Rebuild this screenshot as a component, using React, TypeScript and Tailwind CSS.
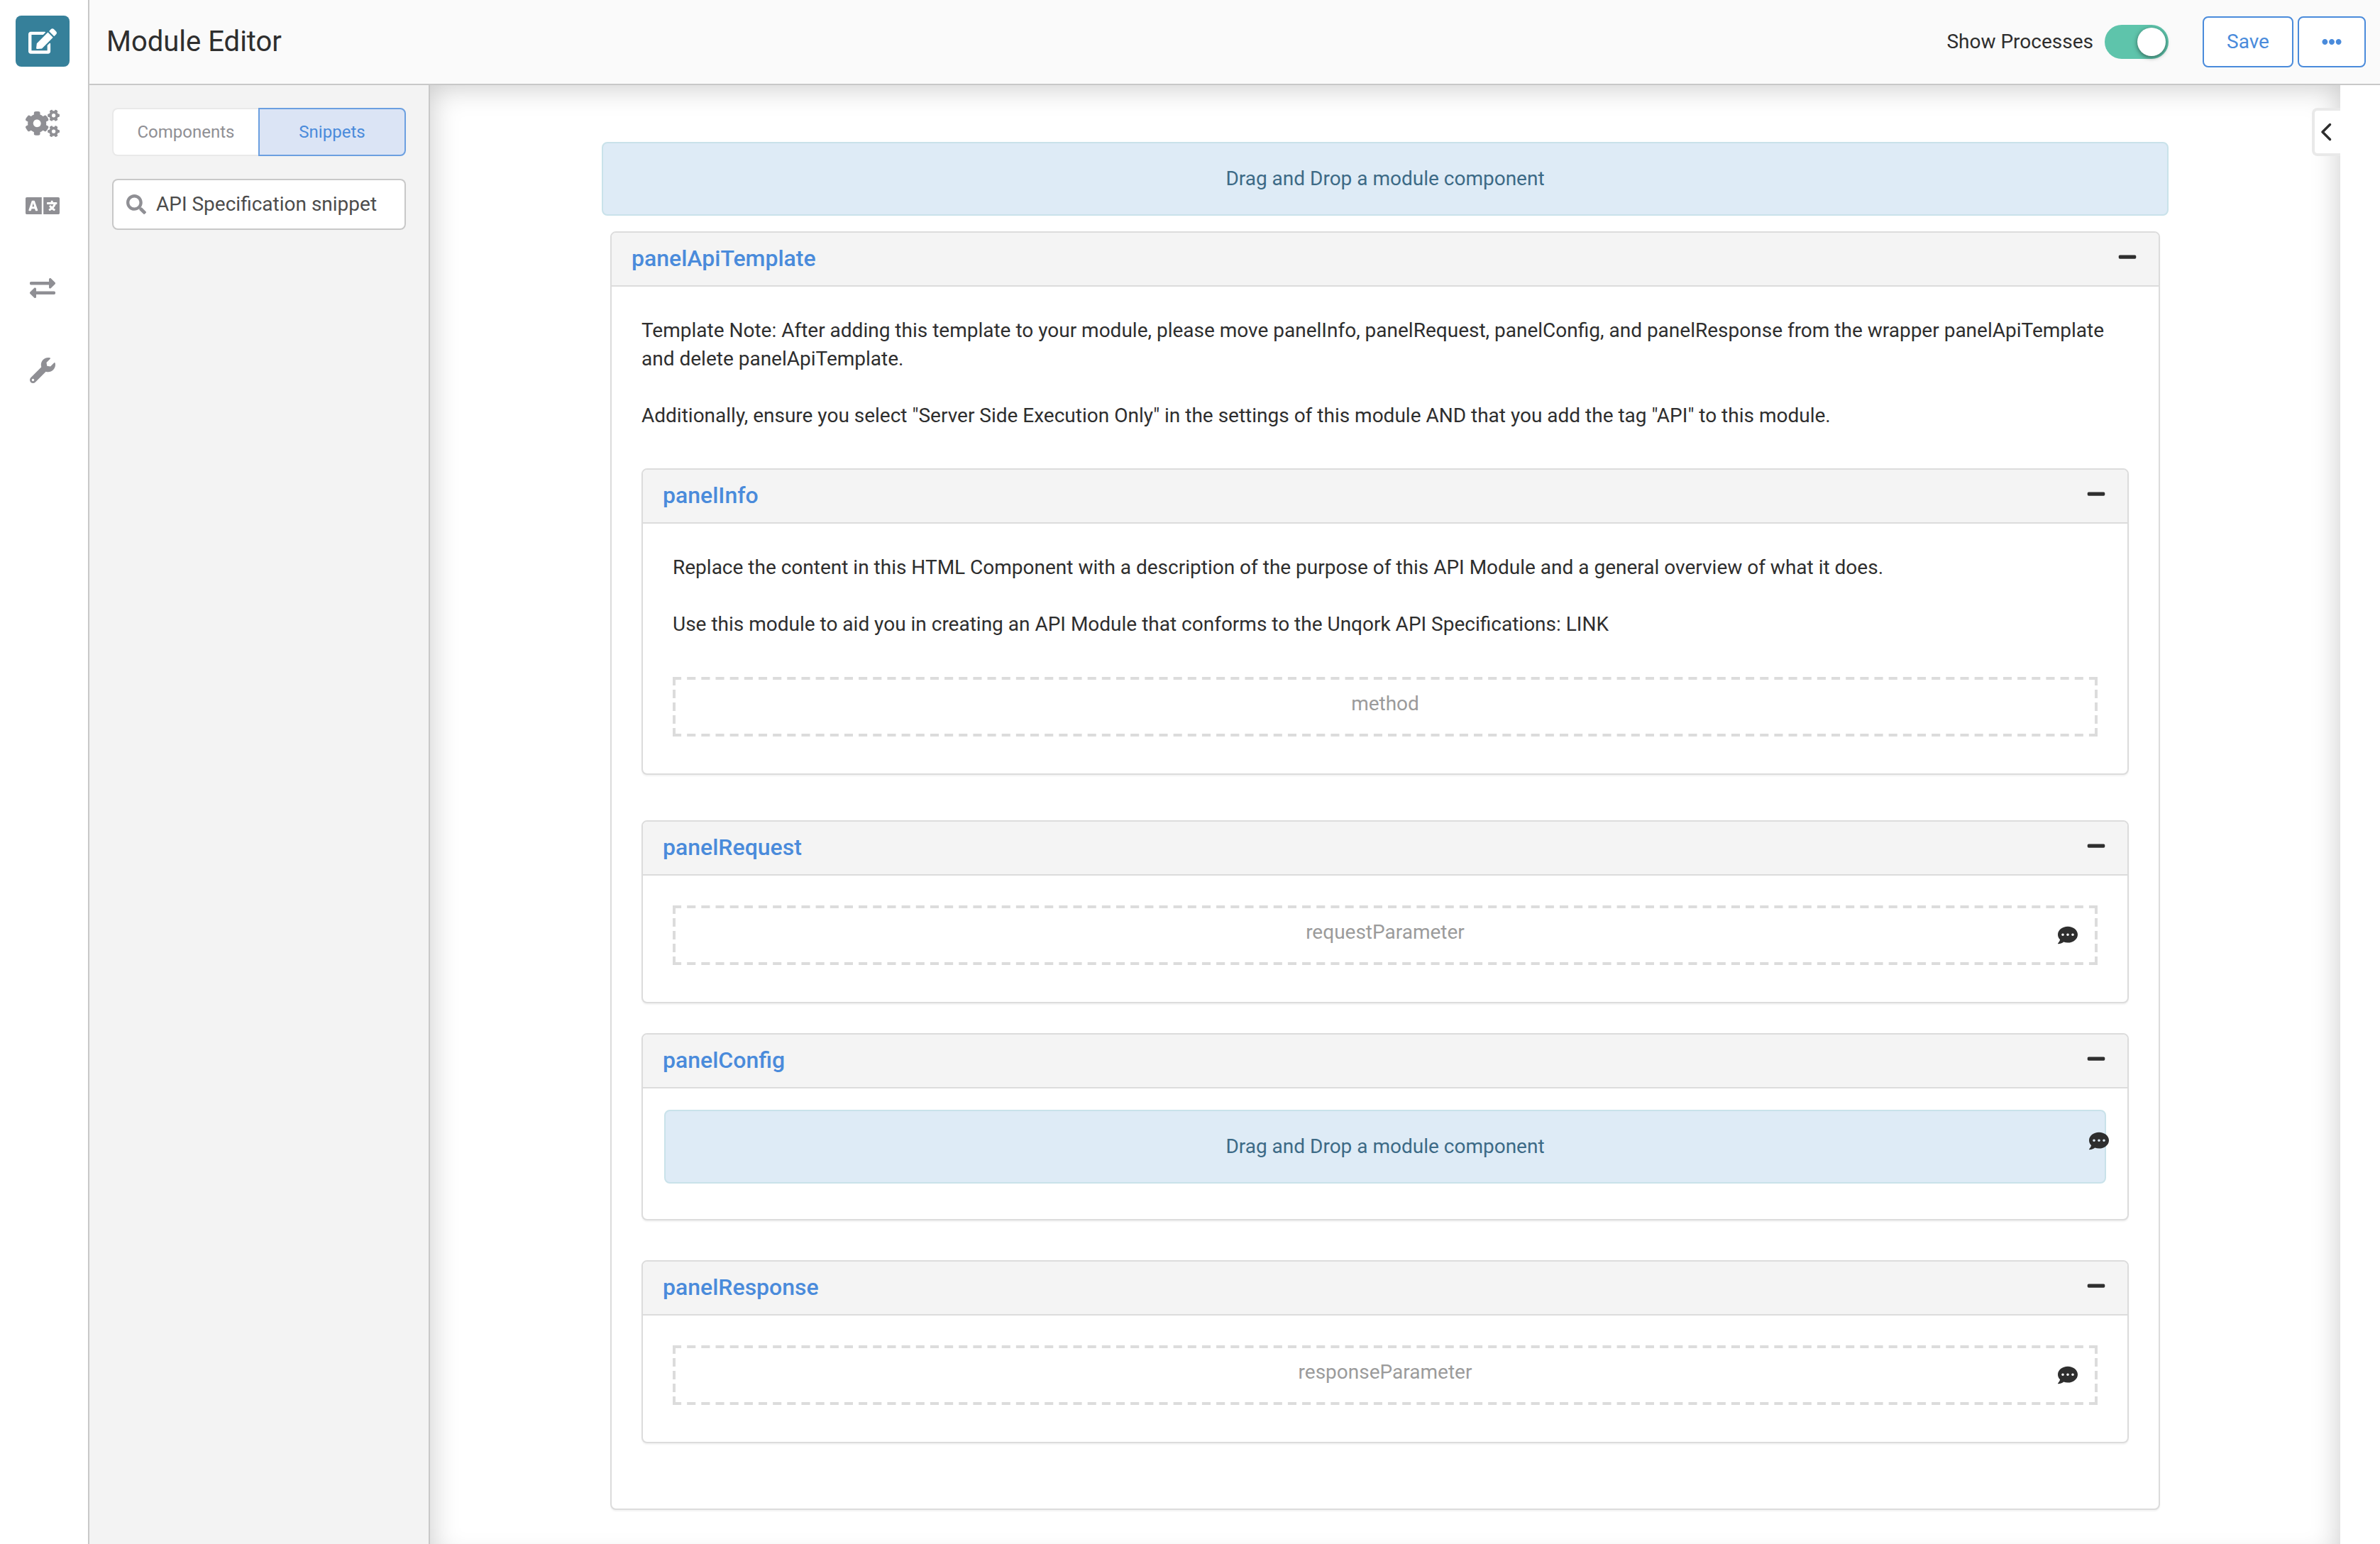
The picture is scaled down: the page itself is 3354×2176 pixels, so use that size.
import type { ReactNode } from "react";
import {
  FaCogs,
  FaCommentDots,
  FaEdit,
  FaEllipsisH,
  FaExchangeAlt,
  FaLanguage,
  FaMinus,
  FaSearch,
  FaWrench,
} from "react-icons/fa";
import { FaChevronLeft } from "react-icons/fa6";

const navItems = [
  { label: "Settings", icon: <FaCogs className="h-12 w-12" /> },
  { label: "Translations", icon: <FaLanguage className="h-12 w-12" /> },
  { label: "Data transfer", icon: <FaExchangeAlt className="h-9 w-9" /> },
  { label: "Tools", icon: <FaWrench className="h-9 w-9" /> },
];

function Sidebar() {
  return (
    <nav className="flex w-[126px] shrink-0 flex-col items-center gap-11 border-r-2 border-[#c8c8c8] bg-white pr-1 pt-[22px]">
      <button
        aria-label="Module Editor"
        className="flex h-[72px] w-[76px] items-center justify-center rounded-lg bg-[#36809a] text-white"
      >
        <FaEdit className="h-9 w-10" />
      </button>
      {navItems.map((item) => (
        <button
          key={item.label}
          aria-label={item.label}
          className="flex h-[72px] w-[76px] items-center justify-center text-[#8f8f94]"
        >
          {item.icon}
        </button>
      ))}
    </nav>
  );
}

function TopBar() {
  return (
    <header className="flex h-[120px] shrink-0 items-center border-b-2 border-[#c8c8c8] bg-[#fafafa] pl-6 pr-5">
      <h1 className="text-[40px] leading-[48px]">Module Editor</h1>
      <label className="ml-auto flex items-center gap-4">
        Show Processes
        <span className="relative flex h-12 w-[90px]">
          <input
            type="checkbox"
            role="switch"
            defaultChecked
            className="peer h-full w-full appearance-none rounded-full bg-[#b9b9b9] checked:bg-[#5ec4ab]"
          />
          <span className="pointer-events-none absolute left-1 top-1 h-10 w-10 rounded-full bg-white shadow-[0_2px_6px_rgba(0,0,0,0.5)] peer-checked:left-[46px]" />
        </span>
      </label>
      <div className="ml-12 flex gap-[6px] text-[#4a8bdb]">
        <button className="h-[72px] w-32 rounded-lg border-2 border-[#4a8bdb] bg-white">Save</button>
        <button
          aria-label="More actions"
          className="flex h-[72px] w-24 items-center justify-center rounded-lg border-2 border-[#4a8bdb] bg-white"
        >
          <FaEllipsisH className="h-7 w-7" />
        </button>
      </div>
    </header>
  );
}

function SnippetSearch() {
  return (
    <aside className="flex w-[480px] shrink-0 flex-col gap-8 border-r-2 border-[#c8c8c8] bg-[#f3f3f3] px-8 pt-8">
      <div className="flex h-[68px] text-2xl">
        <button className="flex-1 rounded-l-lg border-2 border-r-0 border-[#e9e9e9] bg-white text-[#8f8f94]">
          Components
        </button>
        <button className="flex-1 rounded-r-lg border-2 border-[#6b9fe0] bg-[#dbe4f5] text-[#4a8bdb]">
          Snippets
        </button>
      </div>
      <label className="flex h-[72px] items-center gap-[14px] rounded-lg border-2 border-[#c8c8c8] bg-white pl-[18px] pr-4">
        <FaSearch aria-hidden="true" className="h-7 w-7 shrink-0 text-[#8f8f94]" />
        <input
          type="text"
          aria-label="Search snippets"
          defaultValue="API Specification snippet"
          className="min-w-0 flex-1 bg-transparent text-[#4c4c4c] outline-none"
        />
      </label>
    </aside>
  );
}

function DropZone() {
  return (
    <div className="flex h-[104px] items-center justify-center rounded-lg border-2 border-[#c9e2ea] bg-[#deebf6] text-[#3c6a86]">
      Drag and Drop a module component
    </div>
  );
}

function CommentBadge({ className }: { className: string }) {
  return (
    <button aria-label="Comments" className={`absolute text-[#2e2e2e] ${className}`}>
      <FaCommentDots className="h-7 w-7" />
    </button>
  );
}

// Strokes sit on the box edge, so only their inner 4px shows.
// pathLength keeps a full dash in every corner at any width.
function DashedOutline() {
  return (
    <svg
      aria-hidden="true"
      className="pointer-events-none absolute inset-0 h-full w-full overflow-hidden"
      stroke="#dcdcdc"
      strokeWidth="8"
    >
      <line x1="0" y1="0" x2="100%" y2="0" pathLength={1992} strokeDasharray="12 8" />
      <line x1="0" y1="100%" x2="100%" y2="100%" pathLength={1992} strokeDasharray="12 8" />
      <line x1="0" y1="0" x2="0" y2="100%" pathLength={84} strokeDasharray="12 6" />
      <line x1="100%" y1="0" x2="100%" y2="100%" pathLength={84} strokeDasharray="12 6" />
    </svg>
  );
}

function Placeholder({ name, comment }: { name: string; comment?: boolean }) {
  return (
    <div className="relative h-[84px] pt-[18px] text-center text-[#9b9b9b]">
      <DashedOutline />
      {name}
      {comment ? <CommentBadge className="right-7 top-7" /> : null}
    </div>
  );
}

function Panel({
  title,
  bodyClass,
  children,
}: {
  title: string;
  bodyClass: string;
  children: ReactNode;
}) {
  return (
    <section className="rounded-lg border-2 border-[#dcdcdc] bg-white shadow-[0_2px_2px_rgba(0,0,0,0.05)]">
      <header className="flex h-[76px] items-start justify-between rounded-t-md border-b-2 border-[#dcdcdc] bg-[#f4f4f4] pl-7 pr-[30px] pt-4">
        <h2 className="text-[32px] font-medium leading-10 text-[#4a8bdb]">{title}</h2>
        <button aria-label={`Collapse ${title}`} className="pt-1">
          <FaMinus className="h-7 w-7" />
        </button>
      </header>
      <div className={bodyClass}>{children}</div>
    </section>
  );
}

function Canvas() {
  return (
    <main className="relative flex-1 overflow-hidden bg-white px-[242px] pt-20">
      <div className="pointer-events-none absolute -bottom-6 left-0 right-0 top-0 shadow-[inset_0_2px_40px_rgba(0,0,0,0.22)]" />
      <button
        aria-label="Open properties"
        className="absolute right-0 top-8 flex h-[68px] w-10 items-center justify-center rounded-l-lg border-4 border-r-0 border-[#e9e9e9] bg-white"
      >
        <FaChevronLeft className="h-7 w-7" />
      </button>

      <DropZone />

      <div className="mx-3 mt-[22px]">
        <Panel title="panelApiTemplate" bodyClass="px-[42px] pb-[92px] pt-[42px]">
          <p>
            Template Note: After adding this template to your module, please move panelInfo, panelRequest,
            panelConfig, and panelResponse from the wrapper panelApiTemplate and delete panelApiTemplate.
          </p>
          <p className="mb-[54px] mt-10">
            Additionally, ensure you select "Server Side Execution Only" in the settings of this module AND
            that you add the tag "API" to this module.
          </p>

          <Panel title="panelInfo" bodyClass="px-[42px] pb-[52px] pt-[42px]">
            <p>
              Replace the content in this HTML Component with a description of the purpose of this API
              Module and a general overview of what it does.
            </p>
            <p className="mb-[54px] mt-10">
              Use this module to aid you in creating an API Module that conforms to the Unqork API
              Specifications: LINK
            </p>
            <Placeholder name="method" />
          </Panel>

          <div className="mt-16">
            <Panel title="panelRequest" bodyClass="px-[42px] pb-[52px] pt-[42px]">
              <Placeholder name="requestParameter" comment />
            </Panel>
          </div>

          <div className="mt-[42px]">
            <Panel title="panelConfig" bodyClass="relative px-[30px] pb-[50px] pt-[30px]">
              <DropZone />
              <CommentBadge className="right-[26px] top-[60px]" />
            </Panel>
          </div>

          <div className="mt-14">
            <Panel title="panelResponse" bodyClass="px-[42px] pb-[52px] pt-[42px]">
              <Placeholder name="responseParameter" comment />
            </Panel>
          </div>
        </Panel>
      </div>
    </main>
  );
}

export default function App() {
  return (
    <div className="flex min-h-screen bg-white font-[Roboto,sans-serif] text-[28px] leading-10 text-[#2e2e2e]">
      <Sidebar />
      <div className="flex min-w-0 flex-1 flex-col">
        <TopBar />
        <div className="flex flex-1">
          <SnippetSearch />
          <Canvas />
          <div className="w-14 shrink-0 bg-white" />
        </div>
      </div>
    </div>
  );
}
